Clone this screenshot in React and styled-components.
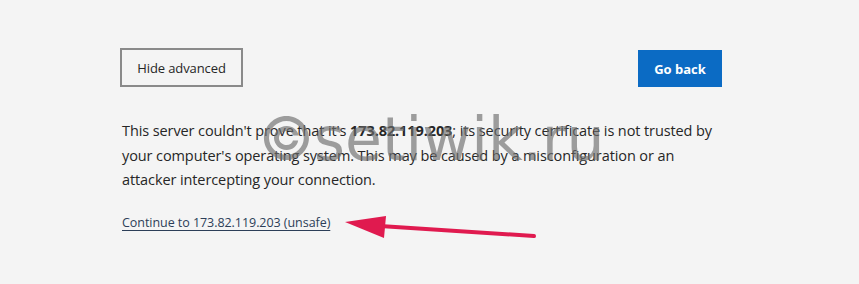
import React from "react";
import styled, { createGlobalStyle } from "styled-components";

const Global = createGlobalStyle`
  html, body { margin: 0; padding: 0; background: #f4f4f4; }
  body { font-family: "Open Sans", "Noto Sans", sans-serif; }
`;

const Page = styled.div`
  position: relative;
  width: 859px;
  height: 284px;
  box-sizing: border-box;
  padding: 48px 0 0 120px;
  background: #f4f4f4;
  overflow: hidden;
`;

const Content = styled.div`
  width: 602px;
  display: flex;
  flex-direction: column;
`;

const ButtonRow = styled.div`
  display: flex;
  justify-content: space-between;
  align-items: flex-start;
`;

const SecondaryButton = styled.button`
  box-sizing: border-box;
  width: 123px;
  height: 39px;
  border: 2px solid #8a8a8a;
  background: #f4f4f4;
  color: #262626;
  font-family: "Open Sans", "Noto Sans", sans-serif;
  font-size: 13px;
  padding: 0;
  letter-spacing: -0.1px;
`;

const PrimaryButton = styled.button`
  box-sizing: border-box;
  margin-top: 2px;
  width: 84px;
  height: 37px;
  border: none;
  background: #0b6bc4;
  color: #fff;
  font-family: "Open Sans", "Noto Sans", sans-serif;
  font-weight: 700;
  font-size: 13px;
  padding: 0;
`;

const Message = styled.p`
  margin: 32px 0 0 2px;
  width: 600px;
  font-size: 14.5px;
  line-height: 24.5px;
  color: #262626;
  letter-spacing: -0.1px;

  b { font-weight: 700; }
`;

const UnsafeLink = styled.a`
  margin: 20px 0 0 2px;
  align-self: flex-start;
  font-size: 12.5px;
  line-height: 20px;
  color: #2c3e58;
  text-decoration: underline;
  text-underline-offset: 3px;
  letter-spacing: -0.05px;
`;

const Watermark = styled.div`
  position: absolute;
  left: 259px;
  top: 93px;
  display: flex;
  align-items: baseline;
  font-family: "DejaVu Sans", "Inter", sans-serif;
  font-size: 60px;
  line-height: 90px;
  color: #6e6e6e;
  opacity: 0.65;
  pointer-events: none;
  white-space: nowrap;
`;

const Copy = styled.span`
  font-family: "Inter", sans-serif;
`;

const Arrow = styled.svg`
  position: absolute;
  left: 340px;
  top: 210px;
  pointer-events: none;
`;

export default function App() {
  return (
    <>
      <Global />
      <Page>
        <Content>
          <ButtonRow>
            <SecondaryButton>Hide advanced</SecondaryButton>
            <PrimaryButton>Go back</PrimaryButton>
          </ButtonRow>
          <Message>
            This server couldn't prove that it's <b>173.82.119.203</b>; its security certificate is not trusted by
            your computer's operating system. This may be caused by a misconfiguration or an
            attacker intercepting your connection.
          </Message>
          <UnsafeLink href="#">Continue to 173.82.119.203 (unsafe)</UnsafeLink>
        </Content>
        <Watermark>
          <Copy>©</Copy>
          <span>setiwik.ru</span>
        </Watermark>
        <Arrow width="200" height="32" viewBox="0 0 200 32">
          <line x1="40" y1="16" x2="194" y2="26" stroke="#e01a4f" strokeWidth="4" strokeLinecap="round" />
          <polygon points="5,12 46,6 44,28" fill="#e01a4f" />
        </Arrow>
      </Page>
    </>
  );
}
